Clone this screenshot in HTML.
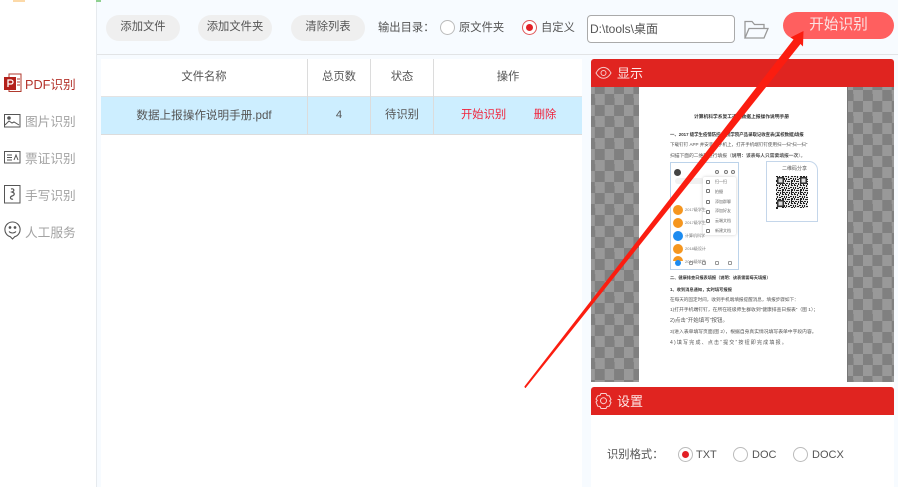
<!DOCTYPE html>
<html><head><meta charset="utf-8"><style>
*{box-sizing:border-box}
html,body{margin:0;padding:0;background:#fff}
body{width:898px;height:487px;overflow:hidden;position:relative}
#w{position:absolute;left:0;top:0;width:898px;height:487px;overflow:hidden;background:#fff;filter:blur(.3px);font-family:"Liberation Sans","Noto Sans CJK SC",sans-serif;font-size:11.3px;color:#555}
.a{position:absolute;white-space:nowrap}
.btn{position:absolute;top:15px;height:26px;background:#efefef;border-radius:13px;text-align:center;line-height:24px;font-size:11.3px;color:#555;white-space:nowrap}
.side{position:absolute;left:25px;font-size:12.7px;color:#a3a3a3;line-height:18px;white-space:nowrap}
.th{position:absolute;top:59px;height:37px;line-height:37px;text-align:center;color:#555;white-space:nowrap}
.td{position:absolute;top:97px;height:37px;line-height:37px;text-align:center;color:#555;white-space:nowrap}
.rad{position:absolute;width:15px;height:15px;border-radius:50%;border:1px solid #bbb;background:#fff}
.rad.on{border:1.5px solid #e0585a}
.rad.on:after{content:"";position:absolute;left:2.5px;top:2.5px;width:7px;height:7px;border-radius:50%;background:#e22026}
.chk{position:absolute;top:87px;height:295px;background:repeating-conic-gradient(#808080 0 25%,#999 0 50%);background-size:19.3px 22px}
.d{position:absolute;white-space:nowrap;font-size:5px;color:#555;filter:blur(.3px);line-height:7px}
.m{position:absolute;left:706px;width:4px;height:4px;border:.7px solid #777;border-radius:1px}
.c{position:absolute;left:673px;width:10px;height:10px;border-radius:50%;background:#f5961f}
.n{position:absolute;top:261px;width:4px;height:4px;border:.7px solid #999;border-radius:1px}
</style></head><body><div id="w">
<div class="a" style="left:96px;top:0;width:1.5px;height:487px;background:#e6eaee"></div>
<div class="a" style="left:97px;top:0;width:801px;height:54px;background:#f7fbff"></div>
<div class="a" style="left:97px;top:54px;width:801px;height:1px;background:#e2e4e6"></div>
<div class="a" style="left:97px;top:55px;width:801px;height:432px;background:#f7fbff"></div>
<div class="a" style="left:101px;top:59px;width:481px;height:428px;background:#fff"></div>
<div class="a" style="left:13px;top:0;width:12px;height:2px;background:#fcd9a8"></div>
<div class="a" style="left:96px;top:0;width:5px;height:2px;background:#8fd08f"></div>

<div class="btn" style="left:106px;width:74px">添加文件</div>
<div class="btn" style="left:198px;width:74px">添加文件夹</div>
<div class="btn" style="left:291px;width:74px">清除列表</div>
<div class="a" style="left:378px;top:20px;line-height:17px">输出目录：</div>
<div class="rad" style="left:440px;top:20px"></div>
<div class="a" style="left:459px;top:20px;line-height:17px">原文件夹</div>
<div class="rad on" style="left:522px;top:20px"></div>
<div class="a" style="left:541px;top:20px;line-height:17px">自定义</div>
<div class="a" style="left:587px;top:15px;width:148px;height:28px;border:1px solid #aaa;border-radius:4px;background:#fff;line-height:26px;padding-left:2px;color:#555;font-size:12px">D:\tools\桌面</div>
<svg class="a" style="left:743px;top:19px" width="27" height="22" viewBox="0 0 27 22" fill="none" stroke="#999" stroke-width="1.3"><path d="M2 19V2.500h7l2.500 3H21v4"/><path d="M2 19 6 9.500h19L21 19z"/></svg>
<div class="a" style="left:783px;top:12px;width:111px;height:27px;background:#ff5f5f;border-radius:14px;color:#fbe3e3;font-size:14.7px;line-height:27px;text-align:center">开始识别</div>

<!-- sidebar -->
<svg class="a" style="left:4px;top:73px" width="18" height="20" viewBox="0 0 18 20"><path d="M5 1h12v17.500H5z" fill="#fff" stroke="#b03a2e"/><path d="M0 4h12v13H0z" fill="#b3201a"/><path d="M4 14V7h3a2 2 0 0 1 0 4H4" fill="none" stroke="#fff" stroke-width="1.300"/><path d="M13 6h3M13 9h3M13 12h3" stroke="#b03a2e"/></svg>
<div class="side" style="top:76px;color:#b3332b">PDF识别</div>
<svg class="a" style="left:4px;top:114px" width="17" height="14" viewBox="0 0 17 14" fill="none" stroke="#555"><rect x=".5" y=".5" width="15.500" height="12.500"/><path d="M1 11l4-4 3 2 2-1 5 3"/><circle cx="5" cy="4" r="1.300" fill="#555"/></svg>
<div class="side" style="top:113px">图片识别</div>
<svg class="a" style="left:4px;top:151px" width="17" height="13" viewBox="0 0 17 13" fill="none" stroke="#555"><rect x=".5" y=".5" width="15.500" height="11.500"/><path d="M3 4h5M3 6.500h5M3 9h5M10 9l2-5 2 5"/></svg>
<div class="side" style="top:150px">票证识别</div>
<svg class="a" style="left:4px;top:185px" width="17" height="19" viewBox="0 0 17 19" fill="none" stroke="#555"><rect x=".5" y=".5" width="15.500" height="17.500"/><path d="M7 4c3-1 4 2 1 3 3 1 3 3 0 4-3 1-1 4 1 3" stroke-width="1.200"/></svg>
<div class="side" style="top:187px">手写识别</div>
<svg class="a" style="left:4px;top:221px" width="17" height="20" viewBox="0 0 17 20" fill="none" stroke="#555" stroke-width="1.100"><path d="M8.500 1a7.500 7.500 0 0 1 2.200 14.700L8.500 18l-2.200-2.300A7.500 7.500 0 0 1 8.500 1z"/><circle cx="6" cy="6.500" r=".8" fill="#555"/><circle cx="11" cy="6.500" r=".8" fill="#555"/><path d="M5 10.500c2 2 5 2 7 0"/></svg>
<div class="side" style="top:224px">人工服务</div>

<!-- table -->
<div class="th" style="left:101px;width:206px">文件名称</div>
<div class="th" style="left:308px;width:62px">总页数</div>
<div class="th" style="left:371px;width:62px">状态</div>
<div class="th" style="left:434px;width:148px">操作</div>
<div class="a" style="left:101px;top:96px;width:481px;height:1px;background:#e3e3e3"></div>
<div class="a" style="left:101px;top:97px;width:481px;height:37px;background:#cdeeff"></div>
<div class="a" style="left:101px;top:134px;width:481px;height:1px;background:#dcdcdc"></div>
<div class="a" style="left:307px;top:59px;width:1px;height:75px;background:#dcdcdc"></div>
<div class="a" style="left:370px;top:59px;width:1px;height:75px;background:#dcdcdc"></div>
<div class="a" style="left:433px;top:59px;width:1px;height:75px;background:#dcdcdc"></div>
<div class="td" style="left:101px;width:206px;font-size:11.6px">数据上报操作说明手册.pdf</div>
<div class="td" style="left:308px;width:62px">4</div>
<div class="td" style="left:371px;width:62px">待识别</div>
<div class="td" style="left:461px;width:45px;color:#f0233c">开始识别</div>
<div class="td" style="left:533px;width:24px;color:#f0233c">删除</div>

<!-- preview -->
<div class="a" style="left:591px;top:59px;width:303px;height:28px;background:#e02420;border-radius:3px 3px 0 0"></div>
<svg class="a" style="left:595px;top:66px" width="17" height="14" viewBox="0 0 17 14" fill="none" stroke="#f6c9c8"><path d="M1 7c4-7.500 11-7.500 15 0-4 7-11 7-15 0z"/><circle cx="8.500" cy="7" r="2.500"/></svg>
<div class="a" style="left:617px;top:65px;color:#fde9e8;font-size:13px;line-height:17px">显示</div>
<div class="chk" style="left:591px;width:48px;background-position:-5.6px -4px"></div>
<div class="chk" style="left:848px;width:46px;background-position:-4.3px 14px"></div>
<div class="a" style="left:639px;top:87px;width:209px;height:295px;background:#fff"></div>
<div class="a" style="left:847px;top:87px;width:1px;height:295px;background:#777"></div>

<div class="d" style="left:694px;top:114px;font-weight:bold;color:#333;font-size:4.75px">计算机科学系复工返校数据上报操作说明手册</div>
<div class="d" style="left:670px;top:131px;font-weight:bold;color:#333;font-size:4.4px">一、2017 级学生疫情防控 学院学院产品录取记收查表(某校数据)填报</div>
<div class="d" style="left:670px;top:141px;font-size:4.55px">下载钉钉 APP 并安装到手机上，打开手机端钉钉使用扫一扫“扫一扫”</div>
<div class="d" style="left:670px;top:153px;font-size:4.75px">扫描下面的二维码进行填报（<b>说明：该表每人只需要填报一次</b>）。</div>

<div class="a" style="left:670px;top:162px;width:69px;height:108px;border:1px solid #bcd3ea;background:#fff"></div>
<div class="a" style="left:674px;top:169px;width:7px;height:7px;border-radius:50%;background:#444"></div>
<div class="a" style="left:675px;top:178px;width:29px;height:6px;background:#f1f1f1;border-radius:3px"></div>
<div class="a" style="left:715px;top:170px;width:4px;height:4px;border:.7px solid #777;border-radius:50%"></div>
<div class="a" style="left:724px;top:170px;width:4px;height:4px;border:.7px solid #777;border-radius:50%"></div>
<div class="a" style="left:731px;top:170px;width:4px;height:4px;border:.7px solid #777;border-radius:50%"></div>
<div class="a" style="left:703px;top:177px;width:33px;height:58px;background:#fff;box-shadow:0 0 3px #ccc;border-radius:2px"></div>
<div class="m" style="top:180px"></div><div class="m" style="top:189px"></div><div class="m" style="top:200px"></div><div class="m" style="top:210px"></div><div class="m" style="top:219px"></div><div class="m" style="top:229px"></div>
<div class="d" style="left:715px;top:177px;font-size:4px;line-height:9.800px;white-space:pre;color:#666">扫一扫
拍摄
添加群聊
添加好友
云端文档
新建文档</div>
<div class="c" style="top:205px"></div>
<div class="c" style="top:218px"></div>
<div class="c" style="top:231px;background:#1c8bf0"></div>
<div class="c" style="top:244px"></div>
<div class="c" style="top:256px;height:5px;border-radius:5px 5px 0 0"></div>
<div class="d" style="left:685px;top:203px;font-size:4px;line-height:13px;white-space:pre;color:#777">2017级学生
2017级学生
计算机科学
2018级设计
2016级软件</div>
<div class="a" style="left:675px;top:260px;width:6px;height:6px;border-radius:50%;background:#1c8bf0"></div>
<div class="n" style="left:689px"></div><div class="n" style="left:702px"></div><div class="n" style="left:715px"></div><div class="n" style="left:728px"></div>

<div class="a" style="left:766px;top:161px;width:52px;height:61px;border:1px solid #c4d6ea;border-radius:0 9px 0 0;background:#fff"></div>
<div class="d" style="left:782px;top:166px">二维码分享</div>
<svg class="a" style="left:776px;top:176px" width="32" height="32" viewBox="0 0 32 32"><defs><pattern id="q" width="9" height="9" patternUnits="userSpaceOnUse"><rect width="9" height="9" fill="#e8e8e8"/><path d="M0 0h2v1H0zM3 0h1v2H3zM6 0h2v1H6zM1 2h1v2H1zM5 2h2v1H5zM8 2h1v2H8zM0 4h1v2H0zM3 3h2v1H3zM2 5h3v1H2zM6 4h2v2H6zM1 7h2v1H1zM4 7h1v2H4zM7 7h2v1H7zM0 8h1v1H0zM6 6h1v3H6z" fill="#222"/></pattern></defs><rect width="32" height="32" fill="url(#q)"/><path d="M1 1h7v7H1zM24 1h7v7h-7zM1 24h7v7H1z" fill="#333"/><path d="M2.500 2.500h4v4h-4zM25.500 2.500h4v4h-4zM2.500 25.500h4v4h-4z" fill="#ddd"/></svg>
<div class="a" style="left:776px;top:207px;width:2px;height:2px;background:#222"></div>

<div class="d" style="left:670px;top:274px;font-weight:bold;color:#333;font-size:4.2px">二、健康排查日报表填报（说明：该表需要每天填报）</div>
<div class="d" style="left:670px;top:286px;font-weight:bold;color:#333;font-size:4.25px">1、收到消息通知，实时填写报报</div>
<div class="d" style="left:670px;top:296px;font-size:4.6px">在每天的固定时间，收到手机端填报提醒消息，填报步骤如下：</div>
<div class="d" style="left:670px;top:307px;font-size:4.8px">1)打开手机端钉钉，在所在班级师生群收到“健康排查日报表”（图 1）；</div>
<div class="d" style="left:670px;top:318px;font-size:5.5px">2)点击“开始填写”按钮。</div>
<div class="d" style="left:670px;top:329px;font-size:4.8px">3)进入表单填写页面(图 2），根据自身真实情况填写表单中字段内容。</div>
<div class="d" style="left:670px;top:340px;letter-spacing:1.2px">4)填写完成、点击“提交”按钮即完成填报。</div>

<!-- settings -->
<div class="a" style="left:591px;top:382px;width:303px;height:5px;background:#fff"></div>
<div class="a" style="left:591px;top:387px;width:303px;height:28px;background:#e02420;border-radius:3px 3px 0 0"></div>
<svg class="a" style="left:595px;top:392px" width="17" height="18" viewBox="0 0 17 18" fill="none" stroke="#f8d0cf"><path d="M6 1.500h5l1 2 2.300.3 1.700 3.700-1.300 1.500 1.300 1.500-1.700 3.700-2.300.3-1 2H6l-1-2-2.300-.3L1 10l1.300-1.500L1 7l1.700-3.200L5 3.500z"/><circle cx="8.500" cy="8.700" r="3"/></svg>
<div class="a" style="left:617px;top:393px;color:#fde9e8;font-size:13px;line-height:17px">设置</div>
<div class="a" style="left:591px;top:415px;width:303px;height:72px;background:#fff"></div>
<div class="a" style="left:607px;top:447px;line-height:16px">识别格式：</div>
<div class="rad on" style="left:678px;top:447px;border-color:#bbb"></div>
<div class="a" style="left:696px;top:447px;line-height:16px;font-size:11px">TXT</div>
<div class="rad" style="left:733px;top:447px"></div>
<div class="a" style="left:752px;top:447px;line-height:16px;font-size:11px">DOC</div>
<div class="rad" style="left:793px;top:447px"></div>
<div class="a" style="left:812px;top:447px;line-height:16px;font-size:11px">DOCX</div>

<!-- arrow -->
<svg class="a" style="left:0;top:0" width="898" height="487" viewBox="0 0 898 487"><path d="M525 388 L524.400 386.500 L793.500 39.500 L790.500 37.500 L803.500 31 L803 46.500 L800.500 44 L525.600 388 Z" fill="#fb1d10"/></svg>
</div></body></html>
